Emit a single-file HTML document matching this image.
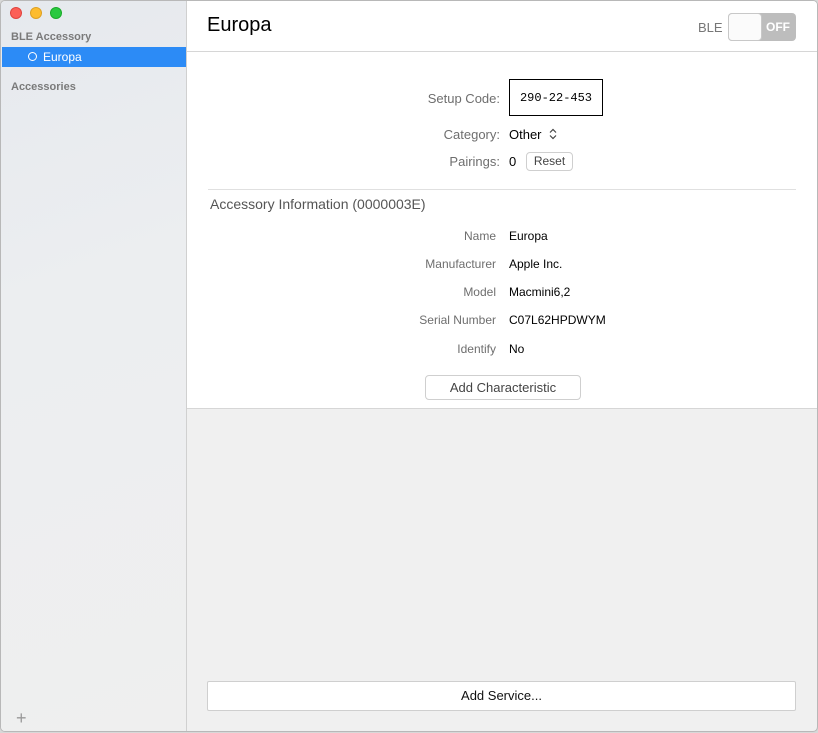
<!DOCTYPE html>
<html><head><meta charset="utf-8"><style>
*{margin:0;padding:0;box-sizing:border-box}
body{width:818px;height:733px;background:#d8d8d8;font-family:"Liberation Sans",sans-serif;font-size:13px;position:relative;overflow:hidden}
.win{position:absolute;left:0;top:0;width:818px;height:732px;border:1px solid #b8b8b8;border-radius:5px;overflow:hidden;background:#f0f0f0}
.side{position:absolute;left:0;top:0;width:186px;height:100%;background:linear-gradient(160deg,#e6e9ee 0%,#eceef0 40%,#efefef 100%);border-right:1px solid #d0d0d0}
.dot{position:absolute;top:6px;width:12px;height:12px;border-radius:50%}
.t{position:absolute;color:#7a7a7a;font-weight:bold;font-size:11px}
.sel{position:absolute;left:1px;top:46px;width:184px;height:20px;background:#2c8bf6;color:#fff;font-size:12px}
.main{position:absolute;left:186px;top:0;right:0;height:408px;background:#fff;border-bottom:1px solid #d6d6d6}
.hdr{position:absolute;left:0;right:0;top:0;height:51px;border-bottom:1px solid #d6d6d6}
.lbl{position:absolute;color:#6e6e6e;text-align:right;font-size:12px}
.val{position:absolute;color:#000;font-size:12px}
.btn{position:absolute;border:1px solid #cfcfcf;border-radius:4px;background:#fff;text-align:center;color:#444;font-size:12px}
</style></head><body>
<div class="win">
<div class="side">
<div class="dot" style="left:9px;background:#fc5f57;border:1px solid #e0443e"></div>
<div class="dot" style="left:29px;background:#fdbc2e;border:1px solid #dea123"></div>
<div class="dot" style="left:49px;background:#29c940;border:1px solid #1aab29"></div>
<div class="t" style="left:10px;top:30px">BLE Accessory</div>
<div class="sel"><span style="position:absolute;left:26px;top:5px;width:9px;height:9px;border:1.5px solid #fff;border-radius:50%"></span><span style="position:absolute;left:41px;top:3px">Europa</span></div>
<div class="t" style="left:10px;top:80px">Accessories</div>
<div style="position:absolute;left:15px;top:708px;color:#999;font-size:18px;line-height:18px">+</div>
</div>
<div class="main">
<div class="hdr">
<div style="position:absolute;left:20px;top:13px;font-size:20px;color:#000">Europa</div>
<div style="position:absolute;left:511px;top:19px;color:#777;font-size:13px">BLE</div>
<div style="position:absolute;left:541px;top:12px;width:68px;height:28px;background:#bdbdbd;border-radius:4px">
<div style="position:absolute;left:0;top:0;width:34px;height:28px;background:#fbfbfb;border:1px solid #c8c8c8;border-radius:4px"></div>
<div style="position:absolute;left:38px;top:7px;color:#fff;font-weight:bold;font-size:12px">OFF</div></div>
</div>
<div class="lbl" style="right:317px;top:90px;font-size:13px">Setup Code:</div>
<div style="position:absolute;left:322px;top:78px;width:94px;height:37px;border:1.5px solid #000;font-family:'Liberation Mono',monospace;font-size:12px;display:flex;align-items:center;justify-content:center">290-22-453</div>
<div class="lbl" style="right:317px;top:126px;font-size:13px">Category:</div>
<div class="val" style="left:322px;top:126px;font-size:13px">Other</div>
<svg style="position:absolute;left:362px;top:127px" width="8" height="12" viewBox="0 0 8 12"><path d="M1 4.5L4 1.5L7 4.5M1 7.5L4 10.5L7 7.5" fill="none" stroke="#444" stroke-width="1.2"/></svg>
<div class="lbl" style="right:317px;top:153px;font-size:13px">Pairings:</div>
<div class="val" style="left:322px;top:153px;font-size:13px">0</div>
<div class="btn" style="left:339px;top:151px;width:47px;height:19px;line-height:17px">Reset</div>
<div style="position:absolute;left:21px;right:21px;top:188px;border-top:1px solid #e0e0e0"></div>
<div style="position:absolute;left:23px;top:195px;font-size:14px;color:#555">Accessory Information (0000003E)</div>
<div class="lbl" style="right:321px;top:228px">Name</div><div class="val" style="left:322px;top:228px">Europa</div>
<div class="lbl" style="right:321px;top:256px">Manufacturer</div><div class="val" style="left:322px;top:256px">Apple Inc.</div>
<div class="lbl" style="right:321px;top:284px">Model</div><div class="val" style="left:322px;top:284px">Macmini6,2</div>
<div class="lbl" style="right:321px;top:312px">Serial Number</div><div class="val" style="left:322px;top:312px">C07L62HPDWYM</div>
<div class="lbl" style="right:321px;top:341px">Identify</div><div class="val" style="left:322px;top:341px">No</div>
<div class="btn" style="left:238px;top:374px;width:156px;height:25px;line-height:23px;font-size:13px">Add Characteristic</div>
</div>
<div class="btn" style="left:206px;top:680px;width:589px;height:30px;line-height:28px;border-radius:2px;color:#111;font-size:13px">Add Service...</div>
</div>
</body></html>
